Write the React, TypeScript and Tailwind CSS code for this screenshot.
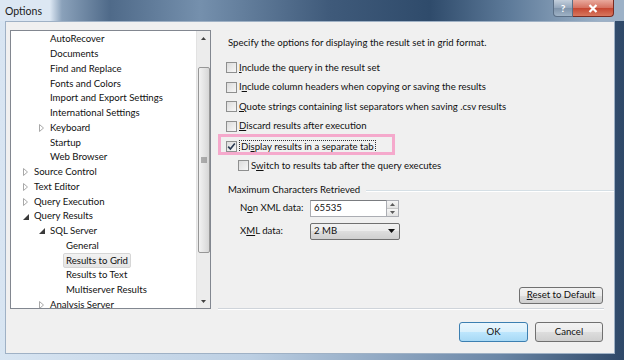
import React from "react";

const tree = [
  { t: "AutoRecover", l: 1 },
  { t: "Documents", l: 1 },
  { t: "Find and Replace", l: 1 },
  { t: "Fonts and Colors", l: 1 },
  { t: "Import and Export Settings", l: 1 },
  { t: "International Settings", l: 1 },
  { t: "Keyboard", l: 1, a: "c" },
  { t: "Startup", l: 1 },
  { t: "Web Browser", l: 1 },
  { t: "Source Control", l: 0, a: "c" },
  { t: "Text Editor", l: 0, a: "c" },
  { t: "Query Execution", l: 0, a: "c" },
  { t: "Query Results", l: 0, a: "e" },
  { t: "SQL Server", l: 1, a: "e" },
  { t: "General", l: 2 },
  { t: "Results to Grid", l: 2, sel: true },
  { t: "Results to Text", l: 2 },
  { t: "Multiserver Results", l: 2 },
  { t: "Analysis Server", l: 1, a: "c" },
];

const indent = ["pl-[8px]", "pl-[24px]", "pl-[40px]"];

const Arrow = ({ kind }: { kind?: string }) => {
  if (kind === "c")
    return (
      <svg width="5" height="8" viewBox="0 0 5 8">
        <path d="M0.5 0.5 L4.5 4 L0.5 7.5 Z" fill="#fff" stroke="#a8a8a8" />
      </svg>
    );
  if (kind === "e")
    return (
      <svg width="6" height="6" viewBox="0 0 6 6">
        <path d="M6 0 L6 6 L0 6 Z" fill="#3a3a3a" />
      </svg>
    );
  return null;
};

const Check = ({ on }: { on?: boolean }) => (
  <span className="w-[11px] h-[11px] shrink-0 border border-[#8e8f8f] bg-[linear-gradient(135deg,#dcdcdc,#f7f7f7)] flex items-center justify-center">
    {on && (
      <svg width="9" height="9" viewBox="0 0 9 9">
        <path d="M1.2 4.6 L3.4 7 L7.8 1.6" fill="none" stroke="#2a3a52" strokeWidth="1.6" />
      </svg>
    )}
  </span>
);

const Btn = ({ children, def, w }: { children: React.ReactNode; def?: boolean; w: string }) => (
  <div
    className={`${w} h-full rounded-[3px] border flex items-center justify-center ${
      def
        ? "border-[#3c7fb1] bg-[linear-gradient(#eaf6fd,#d9f0fc_50%,#bee6fd_50%,#a7d9f5)]"
        : "border-[#707070] bg-[linear-gradient(#f2f2f2,#ebebeb_50%,#dddddd_50%,#cfcfcf)]"
    }`}
  >
    {children}
  </div>
);

export default function App() {
  return (
    <div className="w-[624px] h-[360px] flex flex-col overflow-hidden text-[9.6px] text-[#111] font-[family-name:'Segoe_UI',Lato,sans-serif] bg-[linear-gradient(90deg,#d8e5f2,#bccfe3_40%,#6a86a6_80%,#2e4868)]">
      {/* title bar */}
      <div className="h-[21px] shrink-0 flex items-start bg-[linear-gradient(90deg,#dce7f3_0px,#dce7f3_50px,#8aa1ba_62px,#4f6a89_110px,#7590ad_200px,#3f5a7a_330px,#2f4b6b_430px,#5e7b9a_510px,#9cb1c7_600px)]">
        <span className="pl-[5px] pt-[4px] text-[10.5px] text-[#1a1a1a]">Options</span>
        <div className="ml-auto mr-[10px] flex h-[17px]">
          <div className="w-[20px] h-full rounded-bl-[4px] border border-t-0 border-[#5b6f86] bg-[linear-gradient(#c3cfdc,#93a6bb_50%,#7e93aa_50%,#9fb2c6)] flex items-center justify-center text-white font-bold text-[10px]">
            ?
          </div>
          <div className="w-[41px] h-full rounded-br-[4px] border border-l-0 border-t-0 border-[#7a2b21] bg-[linear-gradient(#e9a99d,#d5705f_50%,#c54530_50%,#d8775e)] flex items-center justify-center">
            <svg width="10" height="9" viewBox="0 0 10 9">
              <path d="M1.5 1 L8.5 8 M8.5 1 L1.5 8" stroke="#fff" strokeWidth="2.2" />
            </svg>
          </div>
        </div>
      </div>

      {/* body */}
      <div className="flex-1 pl-[5px] pr-[9px] pb-[6px] flex">
        <div className="flex-1 bg-[#f0f0f0] border border-[#9fb1c5] flex pt-[8px] pl-[4px]">
          {/* tree */}
          <div className="w-[201px] h-[279px] border border-[#828790] bg-white flex overflow-hidden">
            <div className="flex-1 pt-[1.3px] overflow-hidden">
              {tree.map((r) => (
                <div key={r.t} className={`h-[14.75px] flex items-center whitespace-nowrap ${indent[r.l]}`}>
                  <span className="w-[15px] pl-[4px] flex items-center">
                    <Arrow kind={r.a} />
                  </span>
                  <span
                    className={
                      r.sel
                        ? "-ml-[3px] px-[2px] h-[15px] leading-[13px] rounded-[2px] border border-[#d6d6d6] bg-[linear-gradient(#f2f2f2,#e4e4e4)]"
                        : ""
                    }
                  >
                    {r.t}
                  </span>
                </div>
              ))}
            </div>
            {/* scrollbar */}
            <div className="w-[14px] bg-[#ececec] border-l border-[#e2e2e2] flex flex-col items-center">
              <div className="h-[14px] flex items-center justify-center">
                <svg width="5" height="3" viewBox="0 0 5 3">
                  <path d="M0 3 L2.5 0 L5 3 Z" fill="#404040" />
                </svg>
              </div>
              <div className="mt-[22px] w-[12px] h-[186px] rounded-[2px] border border-[#979797] bg-[linear-gradient(90deg,#f2f2f2,#e2e2e2_60%,#d6d6d6)] flex items-center justify-center">
                <svg width="6" height="6" viewBox="0 0 6 6">
                  <path d="M0 1 H6 M0 3 H6 M0 5 H6" stroke="#6e6e6e" strokeWidth="1" />
                </svg>
              </div>
              <div className="mt-auto h-[14px] flex items-center justify-center">
                <svg width="5" height="3" viewBox="0 0 5 3">
                  <path d="M0 0 L2.5 3 L5 0 Z" fill="#404040" />
                </svg>
              </div>
            </div>
          </div>

          {/* right panel */}
          <div className="ml-[7px] w-[386px] flex flex-col">
            <div className="mt-[6px] h-[14px] leading-[14px] pl-[10px]">
              Specify the options for displaying the result set in grid format.
            </div>
            <div className="mt-[8px] flex flex-col">
              <div className="h-[19.6px] flex items-center gap-[2px] pl-[8px]">
                <Check />
                <span><u>I</u>nclude the query in the result set</span>
              </div>
              <div className="h-[19.6px] flex items-center gap-[2px] pl-[8px]">
                <Check />
                <span>I<u>n</u>clude column headers when copying or saving the results</span>
              </div>
              <div className="h-[19.6px] flex items-center gap-[2px] pl-[8px]">
                <Check />
                <span><u>Q</u>uote strings containing list separators when saving .csv results</span>
              </div>
              <div className="h-[19.6px] flex items-center gap-[2px] pl-[8px]">
                <Check />
                <span><u>D</u>iscard results after execution</span>
              </div>
              <div className="relative h-[19.6px] flex items-center gap-[2px] pl-[8px]">
                <Check on />
                <span className="border border-dotted border-[#333] px-[1px] leading-[11px]">
                  Di<u>s</u>play results in a separate tab
                </span>
                <span className="absolute left-0 top-[-2.5px] w-[177px] h-[21px] border-[3px] border-[#f5a9cc]" />
              </div>
              <div className="h-[19.6px] flex items-center gap-[2px] pl-[20px]">
                <Check />
                <span>S<u>w</u>itch to results tab after the query executes</span>
              </div>
            </div>

            <div className="mt-[8px] h-[14px] flex items-center pl-[10px] -mr-[10px]">
              <span className="whitespace-nowrap">Maximum Characters Retrieved</span>
              <span className="flex-1 ml-[6px] h-[2px] border-t border-[#d5dfe5] border-b border-b-white" />
            </div>

            <div className="mt-[2px] h-[17px] flex items-center pl-[22px]">
              <span className="w-[70px]">N<u>o</u>n XML data:</span>
              <div className="w-[77px] h-full border border-[#abadb3] border-t-[#7a7c80] bg-white pl-[3px] flex items-center">
                65535
              </div>
              <div className="w-[12px] h-full flex flex-col border border-l-0 border-[#abadb3]">
                <div className="flex-1 border-b border-[#c8c8c8] bg-[linear-gradient(#f6f6f6,#e2e2e2)] flex items-center justify-center">
                  <svg width="5" height="3" viewBox="0 0 5 3">
                    <path d="M0 3 L2.5 0 L5 3 Z" fill="#5a5a5a" />
                  </svg>
                </div>
                <div className="flex-1 bg-[linear-gradient(#f6f6f6,#e2e2e2)] flex items-center justify-center">
                  <svg width="5" height="3" viewBox="0 0 5 3">
                    <path d="M0 0 L2.5 3 L5 0 Z" fill="#5a5a5a" />
                  </svg>
                </div>
              </div>
            </div>

            <div className="mt-[6px] h-[17.5px] flex items-center pl-[22px]">
              <span className="w-[70px]">X<u>M</u>L data:</span>
              <div className="w-[90px] h-full rounded-[2px] border border-[#707070] bg-[linear-gradient(#f2f2f2,#ebebeb_50%,#dddddd_50%,#cfcfcf)] pl-[3px] pr-[4px] flex items-center">
                <span className="flex-1">2 MB</span>
                <svg width="7" height="4" viewBox="0 0 7 4">
                  <path d="M0 0 L3.5 4 L7 0 Z" fill="#111" />
                </svg>
              </div>
            </div>

            <div className="mt-[47px] h-[17px] flex justify-end pr-[1px]">
              <Btn w="w-[84px]">
                <span><u>R</u>eset to Default</span>
              </Btn>
            </div>

            <div className="mt-[4px] h-[2px] border-t border-[#cfd4da] border-b border-b-white" />

            <div className="mt-[12px] h-[20px] flex justify-end gap-[7px] pr-[1px]">
              <Btn w="w-[69px]" def>
                OK
              </Btn>
              <Btn w="w-[68px]">Cancel</Btn>
            </div>
          </div>
        </div>
      </div>
    </div>
  );
}
